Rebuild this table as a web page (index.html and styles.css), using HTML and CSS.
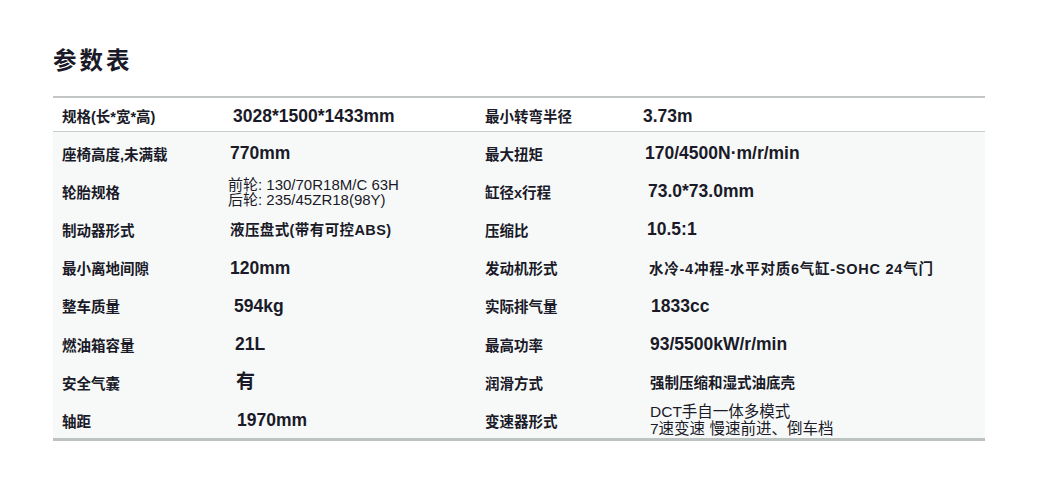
FILE: index.html
```html
<!DOCTYPE html>
<html lang="zh">
<head>
<meta charset="utf-8">
<title>参数表</title>
<link rel="stylesheet" href="styles.css">
</head>
<body>
<div class="page">
  <h1 class="title">参数表</h1>
  <div class="table">
    <div class="row head-row">
      <div class="label">规格(长*宽*高)</div>
      <div class="value o5">3028*1500*1433mm</div>
      <div class="label">最小转弯半径</div>
      <div class="value">3.73m</div>
    </div>
    <div class="body">
      <div class="row">
        <div class="label">座椅高度,未满载</div>
        <div class="value o2">770mm</div>
        <div class="label">最大扭矩</div>
        <div class="value o2">170/4500N·m/r/min</div>
      </div>
      <div class="row">
        <div class="label">轮胎规格</div>
        <div class="value small"><span>前轮: 130/70R18M/C 63H</span><span>后轮: 235/45ZR18(98Y)</span></div>
        <div class="label">缸径x行程</div>
        <div class="value o5">73.0*73.0mm</div>
      </div>
      <div class="row">
        <div class="label">制动器形式</div>
        <div class="value o2 mid spaced">液压盘式(带有可控ABS)</div>
        <div class="label">压缩比</div>
        <div class="value o4">10.5:1</div>
      </div>
      <div class="row">
        <div class="label">最小离地间隙</div>
        <div class="value o2">120mm</div>
        <div class="label">发动机形式</div>
        <div class="value o6 mid wide">水冷-4冲程-水平对质6气缸-SOHC 24气门</div>
      </div>
      <div class="row">
        <div class="label">整车质量</div>
        <div class="value o6">594kg</div>
        <div class="label">实际排气量</div>
        <div class="value o8">1833cc</div>
      </div>
      <div class="row">
        <div class="label">燃油箱容量</div>
        <div class="value o7">21L</div>
        <div class="label">最高功率</div>
        <div class="value o7">93/5500kW/r/min</div>
      </div>
      <div class="row">
        <div class="label">安全气囊</div>
        <div class="value o8 big">有</div>
        <div class="label">润滑方式</div>
        <div class="value o7 mid">强制压缩和湿式油底壳</div>
      </div>
      <div class="row">
        <div class="label">轴距</div>
        <div class="value o9">1970mm</div>
        <div class="label">变速器形式</div>
        <div class="value o7 small dct"><span>DCT手自一体多模式</span><span>7速变速 慢速前进、倒车档</span></div>
      </div>
    </div>
  </div>
</div>
</body>
</html>
```

FILE: styles.css
```css
html, body {
  margin: 0;
  padding: 0;
  background: #ffffff;
}
body {
  font-family: "Liberation Sans", Arial, "Noto Sans CJK SC", sans-serif;
  color: #1a1a28;
}
.page {
  width: 932px;
  padding: 46px 0 0 53px;
}
.title {
  margin: 0;
  font-size: 23.5px;
  line-height: 30px;
  font-weight: 700;
  letter-spacing: 3px;
  height: 50px;
}
.table {
  border-top: 2px solid #c2c6c6;
  border-bottom: 3px solid #bcc3c0;
}
.row {
  box-sizing: border-box;
  display: grid;
  grid-template-columns: 175px 248px 167px 1fr;
  align-items: center;
  height: 38.2px;
  padding-top: 4px;
}
.head-row {
  height: 34px;
  padding-top: 2px;
  border-bottom: 1px solid #c8cccc;
  background: #ffffff;
}
.body {
  background: #f7f9f9;
}
.label {
  padding-left: 9px;
  font-size: 14.5px;
  font-weight: 700;
  line-height: 18px;
  padding-top: 3px;
}
.value {
  font-size: 17.5px;
  font-weight: 700;
  line-height: 20px;
  white-space: nowrap;
}
.value.mid {
  font-size: 14.5px;
  line-height: 18px;
  padding-top: 2px;
}
.value.spaced {
  letter-spacing: 0.4px;
}
.value.wide {
  letter-spacing: 0.75px;
}
.value.big {
  font-size: 19px;
}
.value.small {
  display: flex;
  flex-direction: column;
  font-size: 15px;
  font-weight: 400;
  line-height: 15.5px;
  padding-top: 2px;
}
.value.dct {
  font-size: 15.5px;
  line-height: 17px;
  padding-top: 0;
}
.o2 { padding-left: 2px; }
.o4 { padding-left: 4px; }
.o5 { padding-left: 5px; }
.o6 { padding-left: 6px; }
.o7 { padding-left: 7px; }
.o8 { padding-left: 8px; }
.o9 { padding-left: 9px; }
```
